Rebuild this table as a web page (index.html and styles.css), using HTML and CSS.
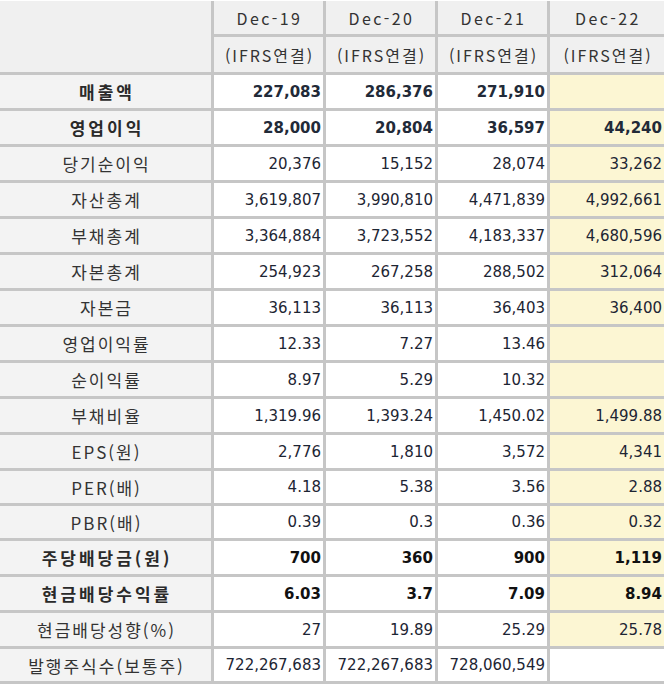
FILE: index.html
```html
<!DOCTYPE html>
<html lang="ko">
<head>
<meta charset="utf-8">
<title>재무정보</title>
<link rel="stylesheet" href="styles.css">
</head>
<body>
<div class="sheet">
  <div class="grid">
    <div class="c corner"></div>
    <div class="c head">Dec-19</div>
    <div class="c head">Dec-20</div>
    <div class="c head">Dec-21</div>
    <div class="c head last">Dec-22</div>

    <div class="c head sub">(IFRS연결)</div>
    <div class="c head sub">(IFRS연결)</div>
    <div class="c head sub">(IFRS연결)</div>
    <div class="c head sub last">(IFRS연결)</div>

    <div class="c lbl b">매출액</div>
    <div class="c num b">227,083</div>
    <div class="c num b">286,376</div>
    <div class="c num b">271,910</div>
    <div class="c num b est last"></div>

    <div class="c lbl b">영업이익</div>
    <div class="c num b">28,000</div>
    <div class="c num b">20,804</div>
    <div class="c num b">36,597</div>
    <div class="c num b est last">44,240</div>

    <div class="c lbl">당기순이익</div>
    <div class="c num">20,376</div>
    <div class="c num">15,152</div>
    <div class="c num">28,074</div>
    <div class="c num est last">33,262</div>

    <div class="c lbl">자산총계</div>
    <div class="c num">3,619,807</div>
    <div class="c num">3,990,810</div>
    <div class="c num">4,471,839</div>
    <div class="c num est last">4,992,661</div>

    <div class="c lbl">부채총계</div>
    <div class="c num">3,364,884</div>
    <div class="c num">3,723,552</div>
    <div class="c num">4,183,337</div>
    <div class="c num est last">4,680,596</div>

    <div class="c lbl">자본총계</div>
    <div class="c num">254,923</div>
    <div class="c num">267,258</div>
    <div class="c num">288,502</div>
    <div class="c num est last">312,064</div>

    <div class="c lbl">자본금</div>
    <div class="c num">36,113</div>
    <div class="c num">36,113</div>
    <div class="c num">36,403</div>
    <div class="c num est last">36,400</div>

    <div class="c lbl">영업이익률</div>
    <div class="c num">12.33</div>
    <div class="c num">7.27</div>
    <div class="c num">13.46</div>
    <div class="c num est last"></div>

    <div class="c lbl">순이익률</div>
    <div class="c num">8.97</div>
    <div class="c num">5.29</div>
    <div class="c num">10.32</div>
    <div class="c num est last"></div>

    <div class="c lbl">부채비율</div>
    <div class="c num">1,319.96</div>
    <div class="c num">1,393.24</div>
    <div class="c num">1,450.02</div>
    <div class="c num est last">1,499.88</div>

    <div class="c lbl">EPS(원)</div>
    <div class="c num">2,776</div>
    <div class="c num">1,810</div>
    <div class="c num">3,572</div>
    <div class="c num est last">4,341</div>

    <div class="c lbl">PER(배)</div>
    <div class="c num">4.18</div>
    <div class="c num">5.38</div>
    <div class="c num">3.56</div>
    <div class="c num est last">2.88</div>

    <div class="c lbl">PBR(배)</div>
    <div class="c num">0.39</div>
    <div class="c num">0.3</div>
    <div class="c num">0.36</div>
    <div class="c num est last">0.32</div>

    <div class="c lbl b">주당배당금(원)</div>
    <div class="c num bk">700</div>
    <div class="c num bk">360</div>
    <div class="c num bk">900</div>
    <div class="c num bk est last">1,119</div>

    <div class="c lbl b">현금배당수익률</div>
    <div class="c num bk">6.03</div>
    <div class="c num bk">3.7</div>
    <div class="c num bk">7.09</div>
    <div class="c num bk est last">8.94</div>

    <div class="c lbl">현금배당성향(%)</div>
    <div class="c num">27</div>
    <div class="c num">19.89</div>
    <div class="c num">25.29</div>
    <div class="c num est last">25.78</div>

    <div class="c lbl">발행주식수(보통주)</div>
    <div class="c num">722,267,683</div>
    <div class="c num">722,267,683</div>
    <div class="c num">728,060,549</div>
    <div class="c num last"></div>
  </div>
</div>
</body>
</html>
```
FILE: styles.css
```css
html, body {
  margin: 0;
  padding: 0;
  background: #ffffff;
}
.sheet {
  padding-top: 1px;
  width: 664px;
  overflow: hidden;
}
.grid {
  display: grid;
  grid-template-columns: 214px 112px 112px 112px 114px;
  grid-template-rows: 36px 38px repeat(11, 36px) 35px 35px 36px 36px 36px 35px;
}
.c {
  box-sizing: border-box;
  border-right: 3px solid #c6c6c6;
  border-bottom: 3px solid #c6c6c6;
  display: flex;
  align-items: center;
  min-width: 0;
  white-space: nowrap;
  overflow: hidden;
}
.c.last {
  border-right: none;
}
.corner {
  grid-row: span 2;
  background: #f0f0f0;
}
.head {
  justify-content: center;
  background: #f0f0f0;
  color: #333333;
  font-family: "Noto Sans CJK KR", "DejaVu Sans", sans-serif;
  font-size: 16px;
  letter-spacing: 2.4px;
  padding-left: 2px;
}
.head.sub {
  letter-spacing: 2px;
  font-size: 16px;
}
.lbl {
  justify-content: center;
  background: #f3f3f3;
  color: #333333;
  font-family: "Noto Sans CJK KR", sans-serif;
  font-size: 17px;
  letter-spacing: 2px;
  padding-left: 2px;
}
.lbl.b {
  font-weight: 700;
  color: #2a2a2a;
  letter-spacing: 3px;
  padding-left: 3px;
}
.num {
  justify-content: flex-end;
  padding-right: 2px;
  font-family: "DejaVu Sans", "Liberation Sans", sans-serif;
  font-size: 15px;
  color: #1d2533;
}
.num.b {
  font-weight: 700;
  color: #222a38;
}
.num.bk {
  font-weight: 700;
  color: #111111;
}
.est {
  background: #fcf6d3;
}
```
